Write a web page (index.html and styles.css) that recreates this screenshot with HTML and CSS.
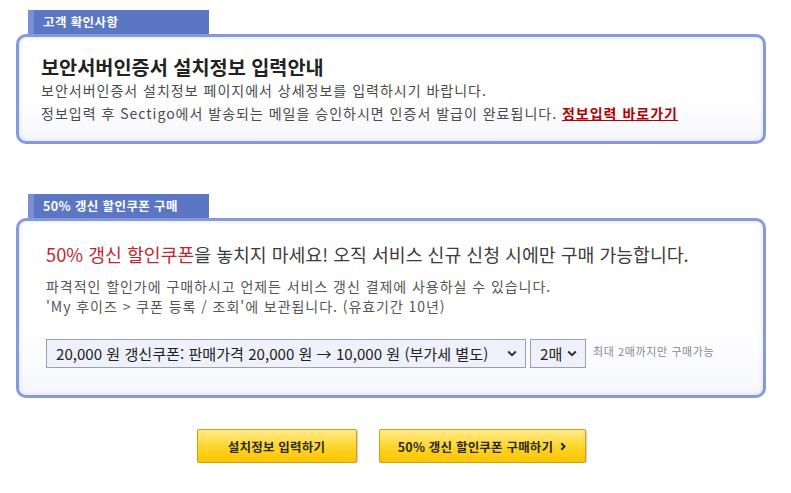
FILE: index.html
```html
<!DOCTYPE html>
<html lang="ko">
<head>
<meta charset="utf-8">
<title>보안서버인증서 설치정보 입력안내</title>
<link rel="stylesheet" href="styles.css">
</head>
<body>
<div class="page">
  <section class="section">
    <div class="tab">고객 확인사항</div>
    <div class="box box-info">
      <h2 class="title">보안서버인증서 설치정보 입력안내</h2>
      <p class="desc">보안서버인증서 설치정보 페이지에서 상세정보를 입력하시기 바랍니다.<br>정보입력 후 Sectigo에서 발송되는 메일을 승인하시면 인증서 발급이 완료됩니다. <a class="link" href="#">정보입력 바로가기</a></p>
    </div>
  </section>

  <section class="section section-coupon">
    <div class="tab">50% 갱신 할인쿠폰 구매</div>
    <div class="box box-coupon">
      <p class="headline"><span class="hl">50% 갱신 할인쿠폰</span>을 놓치지 마세요! 오직 서비스 신규 신청 시에만 구매 가능합니다.</p>
      <p class="sub">파격적인 할인가에 구매하시고 언제든 서비스 갱신 결제에 사용하실 수 있습니다.<br>'My 후이즈 &gt; 쿠폰 등록 / 조회'에 보관됩니다. (유효기간 10년)</p>
      <div class="controls">
        <div class="select select-coupon">
          <span class="select-text">20,000 원 갱신쿠폰: 판매가격 20,000 원 → 10,000 원 (부가세 별도)</span>
          <svg class="chev" width="10" height="7" viewBox="0 0 10 7"><polyline points="1.2,1.5 5,5.2 8.8,1.5" fill="none" stroke="#333" stroke-width="2"/></svg>
        </div>
        <div class="select select-qty">
          <span class="select-text">2매</span>
          <svg class="chev" width="10" height="7" viewBox="0 0 10 7"><polyline points="1.2,1.5 5,5.2 8.8,1.5" fill="none" stroke="#333" stroke-width="2"/></svg>
        </div>
        <span class="note">최대 2매까지만 구매가능</span>
      </div>
    </div>
  </section>

  <div class="actions">
    <a class="btn btn-install" href="#">설치정보 입력하기</a>
    <a class="btn btn-buy" href="#">50% 갱신 할인쿠폰 구매하기<svg class="arrow" width="6" height="9" viewBox="0 0 6 9"><polyline points="1.3,1.2 4.5,4.5 1.3,7.8" fill="none" stroke="#2a2a2a" stroke-width="2"/></svg></a>
  </div>
</div>
</body>
</html>
```

FILE: styles.css
```css
* { box-sizing: border-box; }
html, body { margin: 0; padding: 0; background: #fff; }
body {
  font-family: "Noto Sans CJK KR", "Noto Sans", sans-serif;
  color: #444;
}
.page {
  padding: 10px 0 0 16px;
  width: 766px;
}
.section-coupon { margin-top: 50px; }

.tab {
  margin-left: 12px;
  width: 181px;
  height: 24px;
  background: #5b76c2;
  border-left: 6px solid #7b90d4;
  color: #fff;
  font-size: 12.5px;
  font-weight: 700;
  line-height: 24px;
  padding-left: 9px;
  letter-spacing: 0.4px;
}

.box {
  width: 750px;
  border: 3px solid #8699dc;
  border-radius: 10px;
  background: linear-gradient(#ffffff 60%, #f6f7fd);
  box-shadow: inset 0 0 5px rgba(130, 150, 220, 0.28);
}
.box-info { padding: 18px 20px 16px 22px; }
.title {
  margin: 0;
  font-size: 19.7px;
  font-weight: 700;
  line-height: 24px;
  color: #222;
}
.desc {
  margin: 0;
  font-size: 14px;
  line-height: 23px;
  letter-spacing: 1px;
  color: #4a4a4a;
}
.link {
  color: #b30000;
  font-weight: 700;
  text-decoration: underline;
}

.box-coupon { padding: 19px 20px 27px 27px; }
.headline {
  margin: 0;
  font-size: 18.3px;
  line-height: 28px;
  color: #3c3c3c;
}
.hl { color: #c0272d; }
.sub {
  margin: 8px 0 0;
  font-size: 14px;
  line-height: 20px;
  letter-spacing: 0.95px;
  color: #555;
}
.controls {
  margin-top: 23px;
  display: flex;
  align-items: center;
  gap: 4px;
}
.select {
  height: 29px;
  display: flex;
  align-items: center;
  justify-content: space-between;
  background: #eef0fa;
  border: 1px solid #9aa0b4;
  padding: 0 8px 0 9px;
}
.select-text {
  font-size: 15.1px;
  color: #222;
  line-height: 27px;
  white-space: nowrap;
}
.select-coupon { width: 480px; }
.select-qty { width: 56px; }
.chev { display: block; flex: none; }
.note {
  margin-left: 3px;
  font-size: 11px;
  letter-spacing: 0.6px;
  color: #8a8a8a;
  white-space: nowrap;
  align-self: flex-start;
  margin-top: 4px;
}

.actions {
  margin-top: 31px;
  width: 750px;
  display: flex;
  justify-content: center;
  gap: 22px;
}
.btn {
  display: flex;
  align-items: center;
  justify-content: center;
  height: 34px;
  border: 1px solid #c99f1c;
  border-radius: 2px;
  background: linear-gradient(#ffeb8c, #ffd426 55%, #fcc400);
  box-shadow: 1px 1px 2px rgba(0, 0, 0, 0.22);
  color: #2a2a2a;
  font-size: 12.5px;
  font-weight: 700;
  letter-spacing: 0.2px;
  text-decoration: none;
}
.btn-install { width: 160px; }
.btn-buy { width: 207px; }
.arrow { display: block; margin-left: 7px; flex: none; }
```
